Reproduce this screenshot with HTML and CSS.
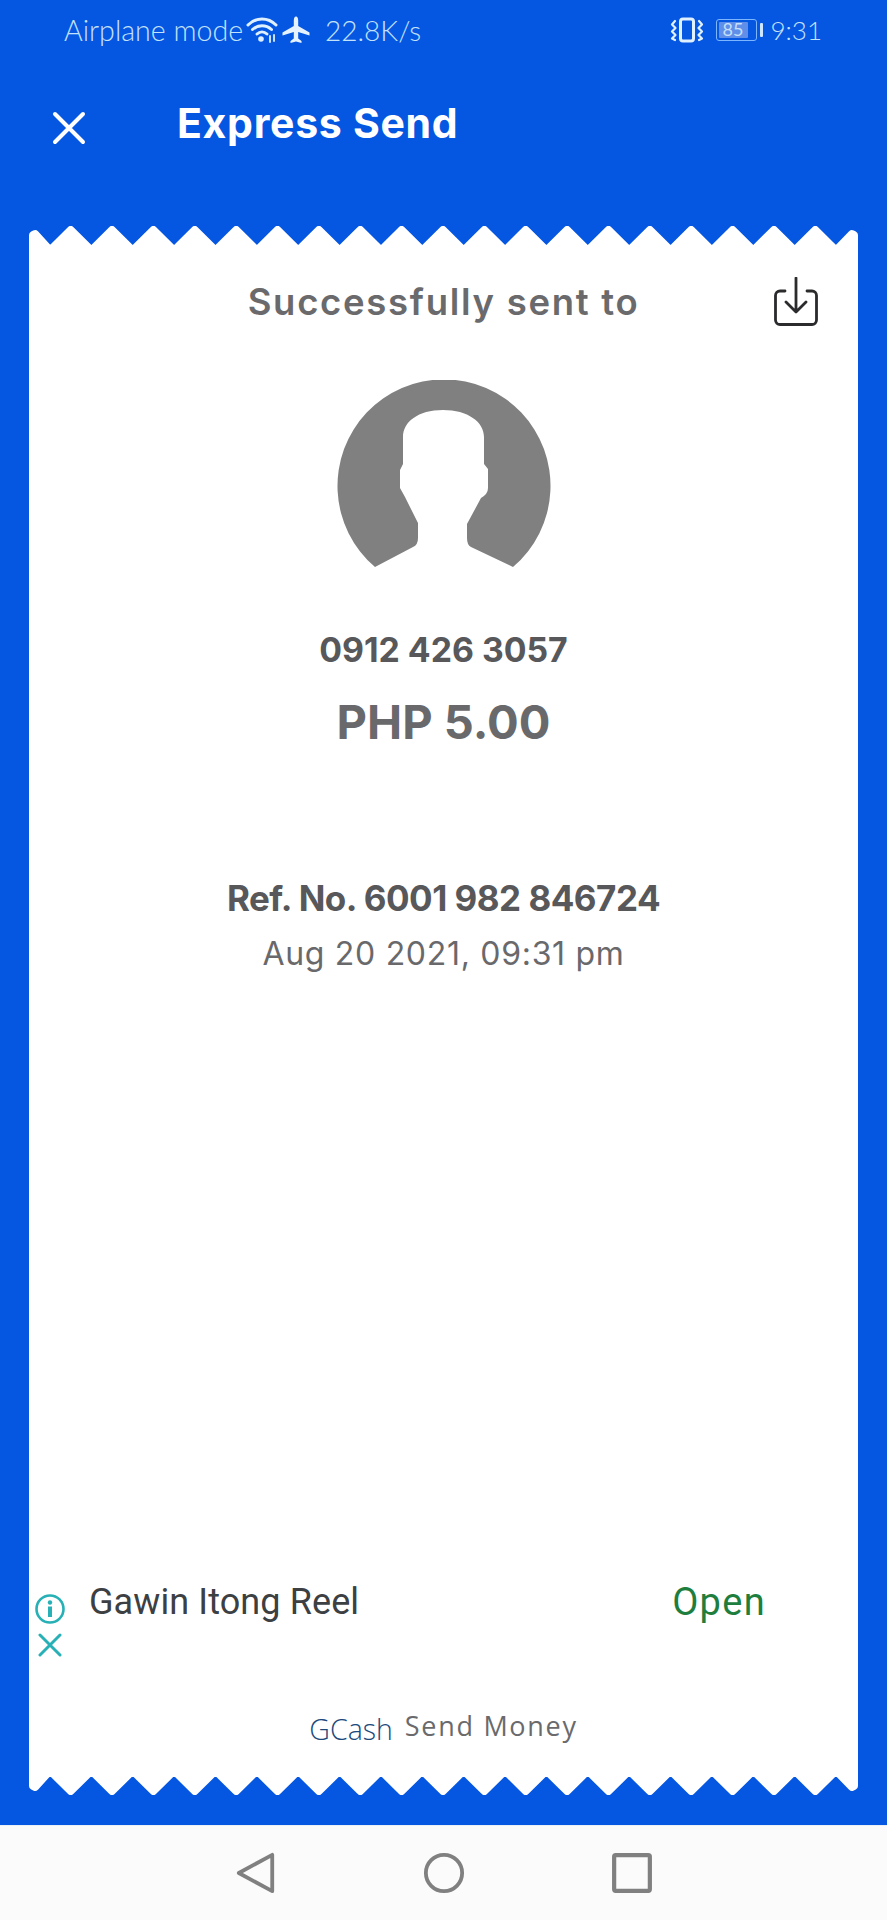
FILE: index.html
```html
<!DOCTYPE html>
<html>
<head>
    <title>Express Send</title>
    <link rel="stylesheet" href="styles.css">
</head>
<body>
    <svg class="defs" width="0" height="0">
        <symbol id="teeth" viewBox="0 0 829 26">
            <polygon points="4,26 4,9 6,8 21,24.500 41.700,4 62.400,24.500 83,4 103.700,24.500 124.400,4 145.100,24.500 165.800,4 186.500,24.500 207.200,4 227.900,24.500 248.500,4 269.200,24.500 289.900,4 310.600,24.500 331.300,4 352,24.500 372.600,4 393.300,24.500 414,4 434.700,24.500 455.400,4 476.100,24.500 496.700,4 517.400,24.500 538.100,4 558.800,24.500 579.500,4 600.200,24.500 620.900,4 641.600,24.500 662.200,4 682.900,24.500 703.600,4 724.300,24.500 745,4 765.700,24.500 786.300,4 807,24.500 823,8 825,9 825,26" fill="#fff" stroke="#fff" stroke-width="8" stroke-linejoin="round"/>
        </symbol>
    </svg>

    <div class="app">
        <div class="status-bar">
            <div class="status-left">
                <span class="status-text status-mode">Airplane mode</span>
                <svg class="icon-wifi" viewBox="0 0 32 26" fill="none" stroke="#dff0ff" stroke-width="3" stroke-linecap="round">
                    <path d="M2 8 C10 0 22 0 30 8"/>
                    <path d="M6.500 12.500 C12 7.500 20 7.500 25.500 12.500"/>
                    <path d="M11 17 C14 14.200 18 14.200 21 17"/>
                    <circle cx="15" cy="22" r="2.800" fill="#dff0ff" stroke="none"/>
                    <path d="M24 19 V25 M28 18 V24" stroke-width="1.800"/>
                </svg>
                <svg class="icon-plane" viewBox="0 0 28 28" fill="#e6f3ff">
                    <path d="M14 0.500 C15.500 0.500 16.200 2.500 16.200 4.500 V10 L27.500 16.500 V19.500 L16.200 16 V22.500 L19.500 25 V27 L14 25.500 L8.500 27 V25 L11.800 22.500 V16 L0.500 19.500 V16.500 L11.800 10 V4.500 C11.800 2.500 12.500 0.500 14 0.500 Z"/>
                </svg>
                <span class="status-text status-speed">22.8K/s</span>
            </div>
            <div class="status-right">
                <svg class="icon-vibrate" viewBox="0 0 34 26" fill="none" stroke="#dff0ff" stroke-width="3" stroke-linecap="round" stroke-linejoin="round">
                    <rect x="10.500" y="2" width="13" height="22" rx="2.500"/>
                    <path d="M5 4 L2 7.500 L5.500 11 L2 14.500 L5.500 18 L2 21.500 L5 23" stroke-width="2.200"/>
                    <path d="M29 4 L32 7.500 L28.500 11 L32 14.500 L28.500 18 L32 21.500 L29 23" stroke-width="2.200"/>
                </svg>
                <div class="battery">
                    <div class="battery-body">
                        <span class="battery-level">85</span>
                    </div>
                    <div class="battery-cap"></div>
                </div>
                <span class="status-text status-time">9:31</span>
            </div>
        </div>

        <div class="top-bar">
            <svg class="icon-close" viewBox="0 0 34 34" fill="none" stroke="#fff" stroke-width="4" stroke-linecap="round">
                <path d="M3 3 L31 31 M31 3 L3 31"/>
            </svg>
            <h1 class="page-title">Express Send</h1>
        </div>

        <div class="receipt">
            <svg class="teeth"><use href="#teeth"/></svg>
            <div class="receipt-body">
                <div class="receipt-head">
                    <span></span>
                    <h2 class="sent-title">Successfully sent to</h2>
                    <svg class="icon-save" viewBox="0 0 44 50" fill="none" stroke="#2b2b2d" stroke-width="2.800" stroke-linecap="round" stroke-linejoin="round">
                        <path d="M11 14 H6 A4.500 4.500 0 0 0 1.500 18.500 V43 A4.500 4.500 0 0 0 6 47.500 H38 A4.500 4.500 0 0 0 42.500 43 V18.500 A4.500 4.500 0 0 0 38 14 H33"/>
                        <path d="M22 1 V34 M12 25 L22 35 L32 25"/>
                    </svg>
                </div>

                <svg class="avatar" viewBox="37 20 214 188">
                    <path fill="#808080" d="M75 207 A106.500 106.500 0 1 1 213 207 L171 187 Q167 185 167 178 L167 164 L181 138 Q188 134 188 128 L188 109 L184 104 L184 77 C184 62 168 50 143 50 C118 50 103 62 103 77 L103 104 L100 110 L100 128 L105 137 L118 163 L118 178 Q118 185 113 187 Z"/>
                </svg>

                <div class="phone">0912 426 3057</div>
                <div class="amount">PHP 5.00</div>
                <div class="ref">Ref. No. 6001 982 846724</div>
                <div class="date">Aug 20 2021, 09:31 pm</div>

                <div class="ad">
                    <div class="ad-icons">
                        <svg class="icon-info" viewBox="0 0 30 30" fill="none" stroke="#27b0b5" stroke-width="2.600">
                            <circle cx="15" cy="15" r="13.500"/>
                            <circle cx="15" cy="8.500" r="2.200" fill="#27b0b5" stroke="none"/>
                            <path d="M15 12.500 V23" stroke-width="4"/>
                        </svg>
                        <svg class="icon-ad-close" viewBox="0 0 24 24" fill="none" stroke="#27b0b5" stroke-width="3" stroke-linecap="round">
                            <path d="M2 2 L22 22 M22 2 L2 22"/>
                        </svg>
                    </div>
                    <div class="ad-title">Gawin Itong Reel</div>
                    <div class="ad-open">Open</div>
                </div>

                <div class="brand">
                    <span class="brand-name">GCash</span>
                    <span class="brand-label">Send Money</span>
                </div>
            </div>
            <svg class="teeth teeth-bottom"><use href="#teeth"/></svg>
        </div>

        <div class="nav-bar">
            <svg class="nav-icon" viewBox="0 0 40 44" fill="none" stroke="#808080" stroke-width="4" stroke-linejoin="round">
                <path d="M37 3 V41 L2 22 Z"/>
            </svg>
            <svg class="nav-icon" viewBox="0 0 44 44" fill="none" stroke="#808080" stroke-width="4">
                <circle cx="22" cy="22" r="19"/>
            </svg>
            <svg class="nav-icon" viewBox="0 0 40 40" fill="none" stroke="#808080" stroke-width="4" stroke-linejoin="round">
                <rect x="3" y="3" width="34" height="34" rx="1.500"/>
            </svg>
        </div>
    </div>
</body>
</html>
```

FILE: styles.css
```css
body {
    margin: 0;
    padding: 0;
    font-family: Inter, "Liberation Sans", sans-serif;
    background-color: #0556e1;
}

.defs {
    display: block;
    height: 0;
}

.app {
    width: 887px;
    height: 1920px;
    display: flex;
    flex-direction: column;
    overflow: hidden;
    background-color: #0556e1;
}

/* status bar */
.status-bar {
    height: 60px;
    flex-shrink: 0;
    display: flex;
    justify-content: space-between;
    align-items: center;
    padding: 0 65px 0 64px;
}

.status-left,
.status-right {
    display: flex;
    align-items: center;
}

.status-text {
    font-family: Lato, sans-serif;
    font-weight: 300;
    font-size: 28px;
    line-height: 36px;
    color: #c3e2fb;
}

.status-mode {
    font-size: 28.600px;
}

.status-time {
    font-size: 26px;
}

.icon-wifi {
    width: 32px;
    height: 26px;
    margin-left: 3px;
}

.icon-plane {
    width: 28px;
    height: 28px;
    margin-left: 4px;
}

.status-speed {
    margin-left: 15px;
}

.icon-vibrate {
    width: 34px;
    height: 26px;
}

.battery {
    display: flex;
    align-items: center;
    margin: 0 8px 0 12px;
}

.battery-body {
    width: 41px;
    height: 22px;
    box-sizing: border-box;
    border: 1.500px solid #7cb6ff;
    border-radius: 3px;
    padding: 2px;
}

.battery-level {
    display: block;
    width: 29px;
    height: 100%;
    background-color: #5f8fe8;
    border-radius: 1px;
    color: #c6dffa;
    font-family: Lato, sans-serif;
    font-size: 18px;
    line-height: 15px;
    text-align: center;
}

.battery-cap {
    width: 3px;
    height: 14px;
    margin-left: 3px;
    border-radius: 1px;
    background-color: #cfe6ff;
}

/* title */
.top-bar {
    height: 166px;
    flex-shrink: 0;
    display: flex;
    align-items: flex-start;
    padding-left: 52px;
}

.icon-close {
    width: 34px;
    height: 34px;
    margin-top: 51px;
}

.page-title {
    margin: 39px 0 0 91px;
    font-size: 41px;
    line-height: 48px;
    font-weight: 700;
    letter-spacing: 0.700px;
    color: #fff;
}

/* receipt */
.receipt {
    flex: 1;
    display: flex;
    flex-direction: column;
    margin: 0 29px 30px;
}

.teeth {
    display: block;
    width: 829px;
    height: 26px;
    flex-shrink: 0;
}

.teeth-bottom {
    transform: scaleY(-1);
}

.receipt-body {
    flex: 1;
    display: flex;
    flex-direction: column;
    align-items: center;
    background-color: #fff;
}

.receipt-head {
    width: 100%;
    box-sizing: border-box;
    display: grid;
    grid-template-columns: 1fr auto 1fr;
    align-items: center;
    margin-top: 25px;
    padding-right: 40px;
}

.sent-title {
    margin: 0 0 0 40px;
    font-size: 36.500px;
    line-height: 40px;
    font-weight: 600;
    letter-spacing: 1.700px;
    color: #6a6a6c;
}

.icon-save {
    justify-self: end;
    width: 44px;
    height: 50px;
}

.avatar {
    width: 214px;
    height: 188px;
    margin-top: 53px;
}

.phone {
    margin-top: 62px;
    font-size: 33.800px;
    line-height: 40px;
    font-weight: 700;
    color: #58585a;
}

.amount {
    margin-top: 22px;
    font-size: 47px;
    line-height: 60px;
    font-weight: 700;
    color: #69696c;
}

.ref {
    margin-top: 126px;
    font-size: 35px;
    line-height: 40px;
    font-weight: 700;
    letter-spacing: -0.500px;
    color: #58585a;
}

.date {
    margin-top: 16px;
    font-size: 32px;
    line-height: 40px;
    letter-spacing: 0.700px;
    color: #69696c;
}

/* ad */
.ad {
    width: 100%;
    height: 73px;
    box-sizing: border-box;
    margin-top: auto;
    display: flex;
    padding: 0 92px 0 6px;
}

.ad-icons {
    width: 30px;
    display: flex;
    flex-direction: column;
    align-items: center;
    gap: 9px;
    padding-top: 7px;
}

.icon-info {
    width: 30px;
    height: 30px;
}

.icon-ad-close {
    width: 24px;
    height: 24px;
}

.ad-title {
    flex: 1;
    margin-left: 24px;
    font-family: Roboto, sans-serif;
    font-size: 36px;
    line-height: 30px;
    font-weight: 450;
    letter-spacing: 0.100px;
    color: #3c4043;
}

.ad-open {
    font-family: Roboto, sans-serif;
    font-size: 38px;
    line-height: 30px;
    font-weight: 450;
    letter-spacing: 1.300px;
    color: #1e7e3e;
}

.brand {
    display: flex;
    align-items: center;
    gap: 12px;
    height: 30px;
    margin-top: 52px;
    margin-bottom: 27px;
}

.brand-name {
    font-family: "Open Sans", sans-serif;
    font-size: 28.500px;
    font-weight: 300;
    color: #1c4a7c;
    margin-top: 4px;
}

.brand-label {
    font-family: "Open Sans", sans-serif;
    font-size: 27px;
    letter-spacing: 1.700px;
    color: #6a6a6c;
    margin-top: -4px;
}

/* bottom nav */
.nav-bar {
    height: 94px;
    flex-shrink: 0;
    border-top: 1px solid #e9f1f7;
    background-color: #fbfbfb;
    display: flex;
    align-items: center;
    justify-content: center;
    gap: 146px;
}

.nav-icon {
    height: 42px;
    width: 42px;
}
```
